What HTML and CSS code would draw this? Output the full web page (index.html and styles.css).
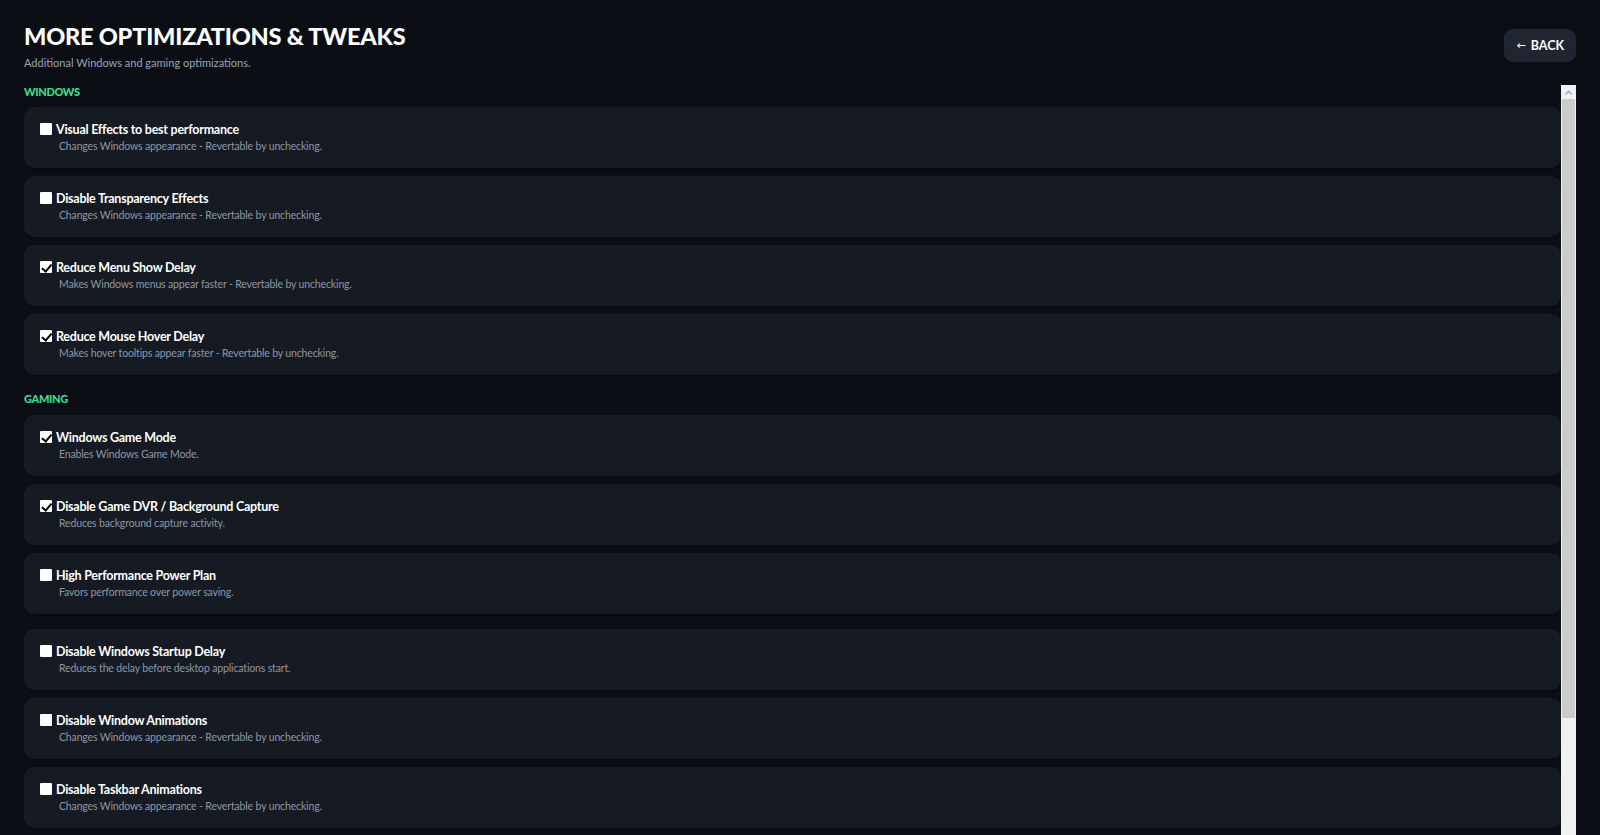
FILE: index.html
```html
<!DOCTYPE html>
<html lang="en">
<head>
<meta charset="utf-8">
<title>More Optimizations &amp; Tweaks</title>
<link rel="stylesheet" href="styles.css">
</head>
<body>
<header class="page-header">
  <div class="heading">
    <h1 class="title">MORE OPTIMIZATIONS &amp; TWEAKS</h1>
    <p class="subtitle">Additional Windows and gaming optimizations.</p>
  </div>
  <button class="back-btn" type="button"><span class="arrow">&larr;</span> BACK</button>
</header>

<div class="scroll-area">
  <main class="scroll-content">
    <h2 class="section-label">WINDOWS</h2>
    <div class="list">
      <label class="card">
        <span class="card-title"><input type="checkbox" class="check">Visual Effects to best performance</span>
        <span class="card-desc">Changes Windows appearance - Revertable by unchecking.</span>
      </label>
      <label class="card">
        <span class="card-title"><input type="checkbox" class="check">Disable Transparency Effects</span>
        <span class="card-desc">Changes Windows appearance - Revertable by unchecking.</span>
      </label>
      <label class="card">
        <span class="card-title"><input type="checkbox" class="check" checked>Reduce Menu Show Delay</span>
        <span class="card-desc">Makes Windows menus appear faster - Revertable by unchecking.</span>
      </label>
      <label class="card">
        <span class="card-title"><input type="checkbox" class="check" checked>Reduce Mouse Hover Delay</span>
        <span class="card-desc">Makes hover tooltips appear faster - Revertable by unchecking.</span>
      </label>
    </div>

    <h2 class="section-label section-gap">GAMING</h2>
    <div class="list">
      <label class="card">
        <span class="card-title"><input type="checkbox" class="check" checked>Windows Game Mode</span>
        <span class="card-desc">Enables Windows Game Mode.</span>
      </label>
      <label class="card">
        <span class="card-title"><input type="checkbox" class="check" checked>Disable Game DVR / Background Capture</span>
        <span class="card-desc">Reduces background capture activity.</span>
      </label>
      <label class="card">
        <span class="card-title"><input type="checkbox" class="check">High Performance Power Plan</span>
        <span class="card-desc">Favors performance over power saving.</span>
      </label>
    </div>

    <div class="list list-gap">
      <label class="card">
        <span class="card-title"><input type="checkbox" class="check">Disable Windows Startup Delay</span>
        <span class="card-desc">Reduces the delay before desktop applications start.</span>
      </label>
      <label class="card">
        <span class="card-title"><input type="checkbox" class="check">Disable Window Animations</span>
        <span class="card-desc">Changes Windows appearance - Revertable by unchecking.</span>
      </label>
      <label class="card">
        <span class="card-title"><input type="checkbox" class="check">Disable Taskbar Animations</span>
        <span class="card-desc">Changes Windows appearance - Revertable by unchecking.</span>
      </label>
    </div>
  </main>

  <div class="scrollbar" aria-hidden="true">
    <div class="sb-button">
      <svg width="7" height="5" viewBox="0 0 7 5"><path d="M0.5 4.2 L3.5 1.2 L6.5 4.2" fill="none" stroke="#a3a3a3" stroke-width="1.4"/></svg>
    </div>
    <div class="sb-thumb"></div>
    <div class="sb-track"></div>
  </div>
</div>
</body>
</html>
```

FILE: styles.css
```css
* {
  box-sizing: border-box;
}

html, body {
  height: 100%;
}

body {
  margin: 0;
  padding: 20px 24px 0;
  background: #0b0f15;
  color: #ffffff;
  font-family: Lato, "Noto Sans", "DejaVu Sans", sans-serif;
  display: flex;
  flex-direction: column;
  overflow: hidden;
}

.page-header {
  display: flex;
  justify-content: space-between;
  align-items: flex-start;
  margin-bottom: 14px;
  flex: none;
}

.title {
  margin: 0;
  font-size: 23.5px;
  line-height: 32px;
  font-weight: 900;
  letter-spacing: -0.2px;
  color: #ffffff;
}

.subtitle {
  margin: 3px 0 0;
  font-size: 11px;
  line-height: 16px;
  color: #9aa4b1;
}

.back-btn {
  margin-top: 9px;
  height: 33px;
  padding: 0 12px;
  border: none;
  border-radius: 9px;
  background: #1f2631;
  color: #ffffff;
  font-family: inherit;
  font-size: 12.5px;
  font-weight: 700;
  display: flex;
  align-items: center;
  gap: 5px;
  cursor: pointer;
}

.back-btn .arrow {
  font-family: "DejaVu Sans", sans-serif;
  font-size: 11px;
  font-weight: 400;
}

.scroll-area {
  flex: 1;
  min-height: 0;
  display: flex;
}

.scroll-content {
  flex: 1;
  min-width: 0;
  overflow: hidden;
}

.scrollbar {
  flex: none;
  width: 15px;
  display: flex;
  flex-direction: column;
  background: #f1f1f1;
}

.sb-button {
  height: 14px;
  display: flex;
  align-items: center;
  justify-content: center;
}

.sb-thumb {
  height: 619px;
  margin: 0 1px;
  background: #cbcbcb;
}

.sb-track {
  flex: 1;
}

.section-label {
  margin: 0 0 8px;
  font-size: 11px;
  line-height: 14px;
  font-weight: 900;
  letter-spacing: -0.35px;
  color: #3ddc8c;
}

.section-gap {
  margin-top: 17px;
  margin-bottom: 9px;
}

.list {
  display: flex;
  flex-direction: column;
  gap: 8px;
}

.list-gap {
  margin-top: 15px;
}

.card {
  display: flex;
  flex-direction: column;
  padding: 15px 16px 15px;
  background: #161b23;
  border-radius: 10px;
  box-shadow: 0 1px 2px rgba(0, 0, 0, 0.35);
  cursor: pointer;
}

.card-title {
  display: flex;
  align-items: center;
  font-size: 12.5px;
  line-height: 16px;
  font-weight: 700;
  letter-spacing: -0.25px;
  color: #ffffff;
}

.card-desc {
  margin-top: 1px;
  padding-left: 19px;
  font-size: 10.5px;
  line-height: 14px;
  letter-spacing: -0.15px;
  color: #8d96a3;
}

.check {
  appearance: none;
  -webkit-appearance: none;
  position: relative;
  width: 12px;
  height: 12px;
  margin: -2px 4px 0 0;
  flex: none;
  background: #ffffff;
  border-radius: 1px;
  cursor: pointer;
}

.check:checked::after {
  content: "";
  position: absolute;
  left: 3.5px;
  top: 0.5px;
  width: 3.5px;
  height: 7.5px;
  border: solid #000000;
  border-width: 0 2px 2px 0;
  transform: rotate(40deg);
}
```
